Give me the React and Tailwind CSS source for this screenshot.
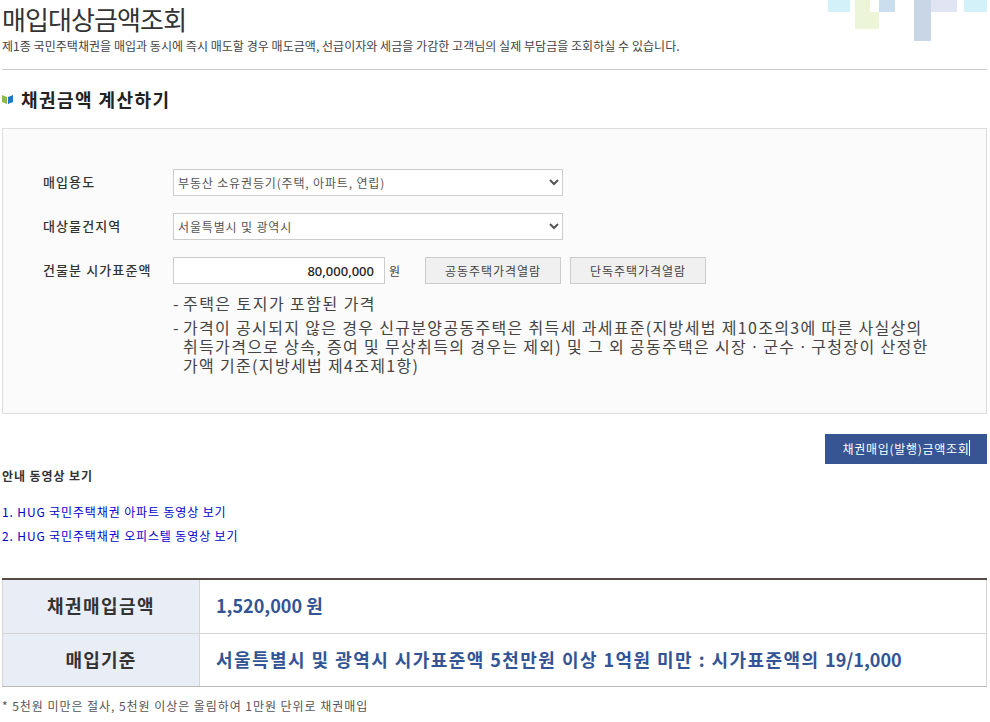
import React from "react";

const FONT = { fontFamily: '"Noto Sans CJK KR", "Noto Sans", sans-serif' };

// faint blocks in the top right corner of the page header
const HeaderDecor = () => (
  <svg className="absolute top-0 left-[828px]" width="162" height="42" viewBox="0 0 162 42">
    <rect x="0" y="0" width="22" height="12" fill="#d3f1f8" />
    <path d="M27 0h15v12h9v17H27z" fill="#ecf5d8" />
    <rect x="51" y="0" width="16" height="12" fill="#cbdeef" />
    <rect x="86" y="0" width="17" height="41" fill="#c9d6e6" />
    <rect x="103" y="0" width="26" height="12" fill="#e1e5f3" />
    <rect x="136" y="0" width="23" height="12" fill="#d3f1f8" />
  </svg>
);

const BookIcon = () => (
  <svg width="11" height="10" viewBox="0 0 11 10">
    <path d="M0 1l5 2v7L0 8z" fill="#8dbb4f" />
    <path d="M6 3l5-2v7l-5 2z" fill="#1f79c4" />
  </svg>
);

const Label = ({ children }) => (
  <div className="w-[130px] shrink-0 pb-[1px] text-[13px] font-medium text-[#333] tracking-[1.1px]">{children}</div>
);

const SelectBox = ({ children }) => (
  <select
    style={FONT}
    className="w-[390px] h-[27px] border border-[#ccc] bg-white pl-0 text-[12px] text-[#555] tracking-[0.85px] outline-none"
  >
    <option>{children}</option>
  </select>
);

const PriceButton = ({ children }) => (
  <button className="w-[136px] h-[27px] border border-[#ccc] bg-[#f0f0f0] text-[12px] text-[#444] tracking-[0.95px]">
    {children}
  </button>
);

const App = () => {
  return (
    <div style={FONT} className="relative w-[990px] h-[722px] overflow-hidden bg-white px-[2px] text-[#333]">
      <HeaderDecor />

      {/* Title */}
      <h1 className="h-[38px] text-[26px] leading-[38px] font-normal text-[#333] tracking-[-0.9px]">매입대상금액조회</h1>
      <p className="h-[31px] text-[12px] leading-[16px] text-[#444] tracking-[0.04px]">
        제1종 국민주택채권을 매입과 동시에 즉시 매도할 경우 매도금액, 선급이자와 세금을 가감한 고객님의 실제 부담금을 조회하실 수 있습니다.
      </p>
      <div className="w-[985px] border-t border-[#ccc]" />

      <div className="mt-[17px] flex h-[24px] items-center gap-[8px]">
        <BookIcon />
        <h2 className="text-[18px] leading-[24px] font-bold text-[#222] tracking-[1.45px]">채권금액 계산하기</h2>
      </div>

      {/* Calculator box */}
      <div className="mt-[17px] w-[985px] h-[286px] border border-[#ddd] bg-[#fbfbfb] pt-[40px] pl-[40px]">
        <div className="flex items-center h-[27px]">
          <Label>매입용도</Label>
          <SelectBox>부동산 소유권등기(주택, 아파트, 연립)</SelectBox>
        </div>
        <div className="mt-[17px] flex items-center h-[27px]">
          <Label>대상물건지역</Label>
          <SelectBox>서울특별시 및 광역시</SelectBox>
        </div>
        <div className="mt-[17px] flex items-center h-[27px]">
          <Label>건물분 시가표준액</Label>
          <input
            readOnly
            value="80,000,000"
            style={{ fontFamily: '"Noto Sans", sans-serif' }}
            className="w-[212px] h-[27px] border border-[#ccc] bg-white pr-[10px] text-right text-[13px] font-medium text-[#222] outline-none"
          />
          <span className="ml-[4px] w-[36px] text-[12px] text-[#444]">원</span>
          <PriceButton>공동주택가격열람</PriceButton>
          <div className="w-[9px]" />
          <PriceButton>단독주택가격열람</PriceButton>
        </div>

        <ul className="ml-[130px] mt-[7px] w-[770px] text-[16px] text-[#444] tracking-[1.33px]">
          <li className="flex h-[24px] leading-[24px] tracking-[1.45px]">
            <span className="w-[10px] shrink-0">-</span>
            <span>주택은 토지가 포함된 가격</span>
          </li>
          <li className="mt-[3px] flex leading-[19px]">
            <span className="w-[10px] shrink-0">-</span>
            <span className="break-keep">
              가격이 공시되지 않은 경우 신규분양공동주택은 취득세 과세표준(지방세법 제10조의3에 따른 사실상의 취득가격으로 상속, 증여 및 무상취득의 경우는 제외) 및 그 외 공동주택은 시장ㆍ군수ㆍ구청장이 산정한 가액 기준(지방세법 제4조제1항)
            </span>
          </li>
        </ul>
      </div>

      <div className="mt-[20px] flex w-[985px] justify-end">
        <button className="relative w-[162px] h-[30px] bg-[#375493] text-[12px] text-white tracking-[0.7px]">
          채권매입(발행)금액조회
          <span className="absolute right-[17px] top-[6px] h-[16px] w-[1px] bg-white" />
        </button>
      </div>

      {/* Video links */}
      <div className="mt-[4px] text-[12px] leading-[16px] font-bold text-[#333] tracking-[0.9px]">안내 동영상 보기</div>
      <div className="mt-[16px] text-[12px] leading-[24px] text-[#0000cc] tracking-[0.87px]">
        <p>1. HUG 국민주택채권 아파트 동영상 보기</p>
        <p>2. HUG 국민주택채권 오피스텔 동영상 보기</p>
      </div>

      {/* Result table */}
      <div className="mt-[30px] w-[985px] border-t-2 border-b border-t-[#554b46] border-b-[#bbb]">
        <div className="flex h-[54px] border-b border-[#d5d5d5]">
          <div className="flex w-[198px] items-center justify-center border-x border-[#d5d5d5] bg-[#e9edf5] pb-[3px] text-[18px] font-bold text-[#333] tracking-[1.4px]">
            채권매입금액
          </div>
          <div className="flex flex-1 items-center pl-[16px] pb-[3px] text-[18px] font-bold text-[#335495] border-r border-[#d5d5d5]">
            1,520,000 원
          </div>
        </div>
        <div className="flex h-[52px]">
          <div className="flex w-[198px] items-center justify-center border-x border-[#d5d5d5] bg-[#e9edf5] pb-[2px] text-[18px] font-bold text-[#333] tracking-[1.2px]">
            매입기준
          </div>
          <div className="flex flex-1 items-center pl-[16px] pb-[2px] text-[18px] font-bold text-[#335495] tracking-[1.45px] border-r border-[#d5d5d5]">
            <span className="whitespace-pre">
              서울특별시 및 광역시 시가표준액 5천만원 이상 1억원 미만 : 시가표준액의 <span className="tracking-normal">19/1,000</span>
            </span>
          </div>
        </div>
      </div>
      <p className="mt-[11px] text-[12px] leading-[16px] text-[#555] tracking-[0.95px]">
        * 5천원 미만은 절사, 5천원 이상은 올림하여 1만원 단위로 채권매입
      </p>
    </div>
  );
};

export default App;
